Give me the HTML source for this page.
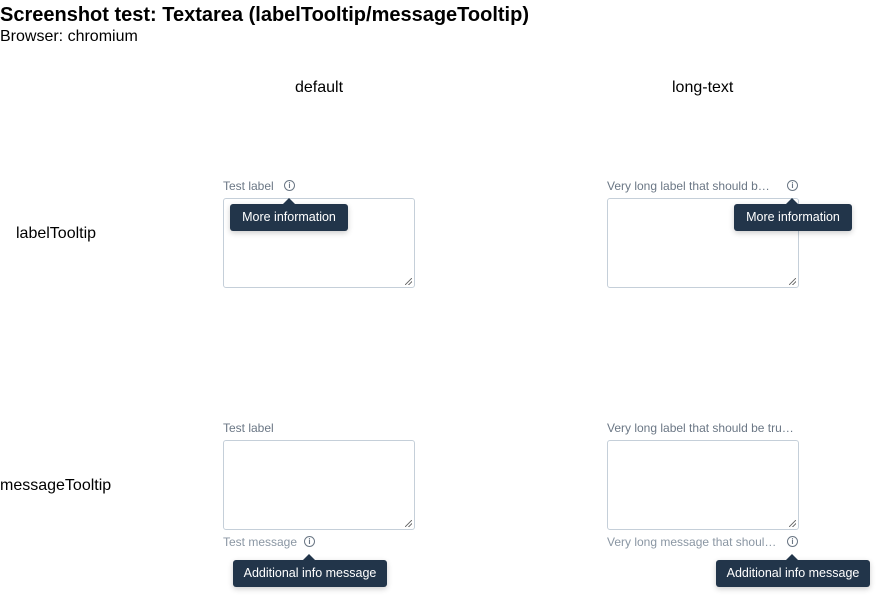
<!DOCTYPE html>
<html><head><style>
body{margin:0;width:880px;height:600px;position:relative;font-family:"Liberation Sans",sans-serif;background:#fff;overflow:hidden}
.a{position:absolute;white-space:nowrap}
.lb{font-size:12px;color:#6b7785}
.ta{position:absolute;width:190px;height:88px;border:1px solid #c5cfd9;border-radius:3px;background:#fff}
.ta:after{content:"";position:absolute;right:2px;bottom:2px;width:7px;height:7px;background:linear-gradient(135deg,transparent 45%,#777 45%,#777 55%,transparent 55%,transparent 70%,#777 70%,#777 80%,transparent 80%)}
.ic{position:absolute;width:9px;height:9px;border:1px solid #6b7785;border-radius:50%;font-size:8px;line-height:9px;text-align:center;color:#6b7785;font-weight:bold}
.tt{position:absolute;height:27px;background:#22354a;color:#fff;font-size:12.5px;line-height:27px;text-align:center;border-radius:3px;box-shadow:0 2px 6px rgba(0,0,0,.2)}
.tt i{position:absolute;top:-6px;width:0;height:0;border-left:6px solid transparent;border-right:6px solid transparent;border-bottom:6px solid #22354a}
</style></head><body>
<div class="a" style="left:0;top:4px;font-size:20px;font-weight:bold">Screenshot test: Textarea (labelTooltip/messageTooltip)</div>
<div class="a" style="left:0;top:28px;font-size:16px">Browser: chromium</div>
<div class="a" style="left:295px;top:79px;font-size:16px">default</div>
<div class="a" style="left:672px;top:79px;font-size:16px">long-text</div>
<div class="a" style="left:16px;top:225px;font-size:16px">labelTooltip</div>
<div class="a" style="left:0;top:477px;font-size:16px">messageTooltip</div>

<div class="a lb" style="left:223px;top:179px">Test label</div>
<div class="ic" style="left:284px;top:180px">i</div>
<div class="ta" style="left:223px;top:198px"></div>
<div class="tt" style="left:230px;top:204px;width:118px">More information<i style="left:53px"></i></div>

<div class="a lb" style="left:607px;top:179px">Very long label that should b…</div>
<div class="ic" style="left:787px;top:180px">i</div>
<div class="ta" style="left:607px;top:198px"></div>
<div class="tt" style="left:734px;top:204px;width:118px">More information<i style="left:52px"></i></div>

<div class="a lb" style="left:223px;top:421px">Test label</div>
<div class="ta" style="left:223px;top:440px"></div>
<div class="a lb" style="left:223px;top:535px;color:#8a96a3">Test message</div>
<div class="ic" style="left:304px;top:536px">i</div>
<div class="tt" style="left:233px;top:560px;width:154px">Additional info message<i style="left:70px"></i></div>

<div class="a lb" style="left:607px;top:421px">Very long label that should be tru…</div>
<div class="ta" style="left:607px;top:440px"></div>
<div class="a lb" style="left:607px;top:535px;color:#8a96a3">Very long message that shoul…</div>
<div class="ic" style="left:787px;top:536px">i</div>
<div class="tt" style="left:716px;top:560px;width:154px">Additional info message<i style="left:70px"></i></div>
</body></html>
